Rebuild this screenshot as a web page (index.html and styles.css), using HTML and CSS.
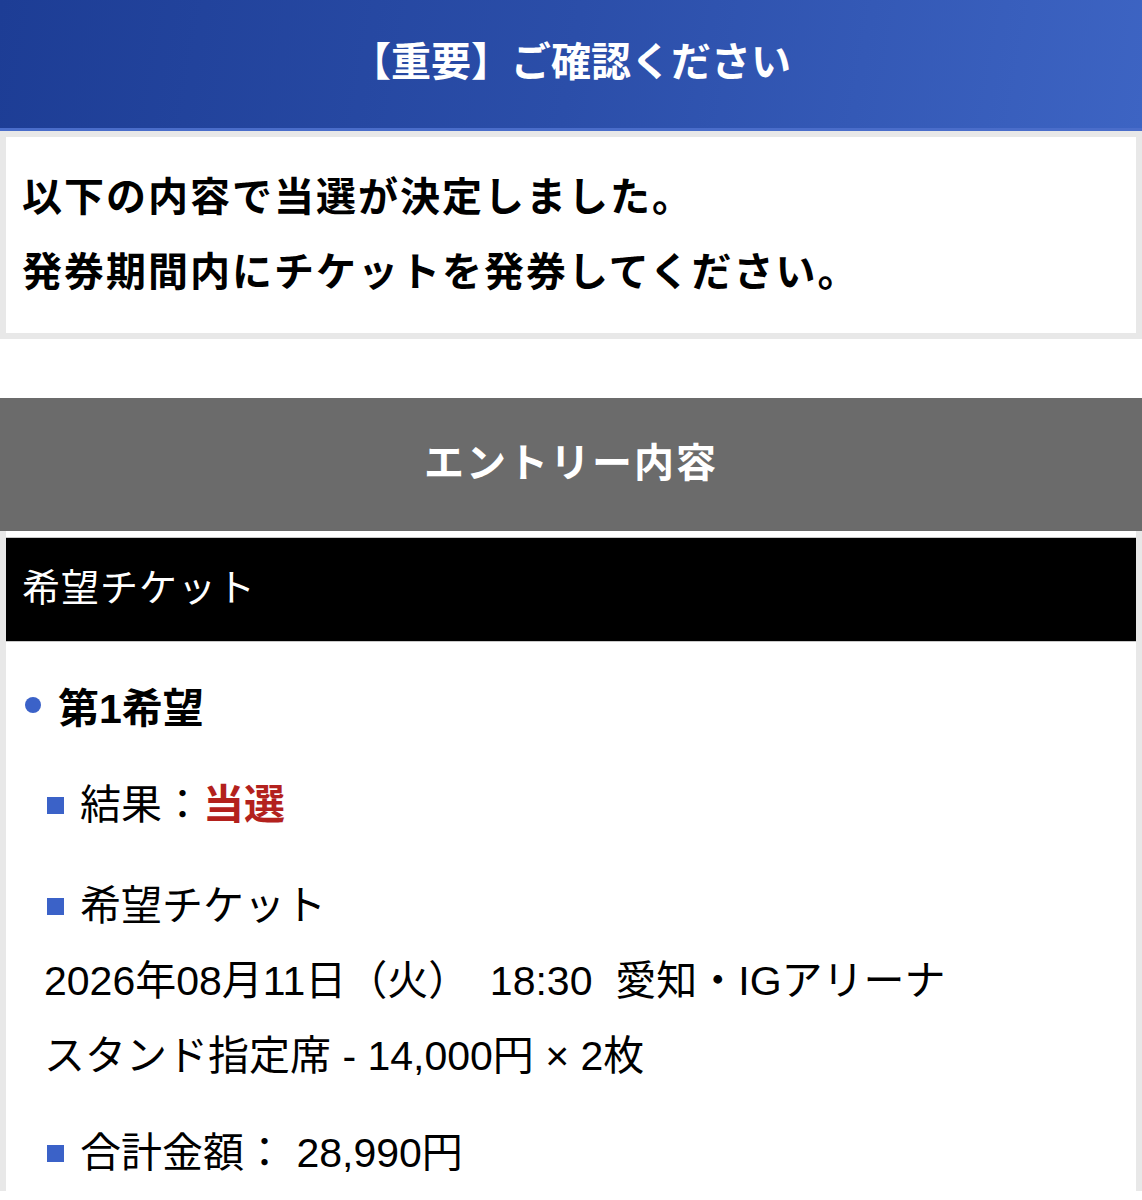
FILE: index.html
```html
<!DOCTYPE html>
<html lang="ja">
<head>
  <meta charset="UTF-8">
  <meta name="viewport" content="width=device-width, initial-scale=1.0">
  <title>抽選結果</title>
  <link rel="stylesheet" href="styles.css">
</head>
<body>
  <h1 class="notice-title">【重要】ご確認ください</h1>

  <!-- Result message -->
  <div class="notice-box">
    <p>以下の内容で当選が決定しました。</p>
    <p>発券期間内にチケットを発券してください。</p>
  </div>

  <h2 class="section-title">エントリー内容</h2>

  <div class="panel">
    <div class="panel-head">希望チケット</div>

    <div class="panel-body">
      <div class="choice">第1希望</div>

      <ul class="details">
        <li class="item">結果：<span class="win">当選</span></li>
        <li class="item">希望チケット</li>
        <li class="plain">2026年08月11日（火）　18:30&nbsp;&nbsp;愛知・IGアリーナ</li>
        <li class="plain">スタンド指定席 - 14,000円 × 2枚</li>
        <li class="item">合計金額： 28,990円</li>
      </ul>
    </div>
  </div>
</body>
</html>
```

FILE: styles.css
```css
body {
  margin: 0;
  font-family: "Liberation Sans", "Noto Sans CJK JP", sans-serif;
  color: #000;
  background-color: #fff;
}

/* Blue title bar */
.notice-title {
  margin: 0;
  height: 128px;
  line-height: 124px;
  text-align: center;
  font-size: 40px;
  font-weight: bold;
  color: #fff;
  background: linear-gradient(100deg, #1d3d95 0%, #2b4ea9 50%, #3d64c3 100%);
  border-bottom: 3px solid #4a6dca;
}

.notice-box {
  border: 6px solid #e8e8e8;
  background-color: #fff;
  padding: 23px 16px;
}

.notice-box p {
  margin: 0;
  font-size: 40px;
  font-weight: bold;
  line-height: 75px;
  letter-spacing: 2px;
}

/* Gray section header */
.section-title {
  margin: 59px 0 0;
  height: 133px;
  line-height: 130px;
  text-align: center;
  font-size: 40px;
  font-weight: bold;
  color: #fff;
  letter-spacing: 2px;
  background-color: #6b6b6b;
}

.panel {
  border-left: 6px solid #e8e8e8;
  border-right: 6px solid #e8e8e8;
  padding-top: 6px;
  background-color: #fff;
}

.panel-head {
  height: 103px;
  line-height: 100px;
  padding-left: 16px;
  font-size: 38px;
  letter-spacing: 1px;
  color: #fff;
  background-color: #000;
  border: 1px solid #c8c8c8;
  border-left: none;
  border-right: none;
}

.panel-body {
  padding: 25px 0 0 17px;
}

/* Round bullet heading */
.choice {
  display: flex;
  align-items: center;
  height: 75px;
  font-size: 41px;
  font-weight: bold;
}

.choice::before {
  content: "";
  width: 16px;
  height: 16px;
  border-radius: 50%;
  background-color: #3b62c8;
  margin: 0 17px 0 2px;
}

.details {
  list-style: none;
  margin: 0;
  padding: 0 0 0 21px;
}

.details li {
  font-size: 41px;
  line-height: 75px;
}

.details .item {
  display: flex;
  align-items: center;
  margin-top: 26px;
}

.details .item::before {
  content: "";
  width: 17px;
  height: 17px;
  background-color: #3b62c8;
  margin: 0 16px 0 3px;
}

.details .plain {
  margin-top: 0;
}

.details .plain + .item {
  margin-top: 22px;
}

.win {
  font-weight: bold;
  color: #b3211d;
}
```
